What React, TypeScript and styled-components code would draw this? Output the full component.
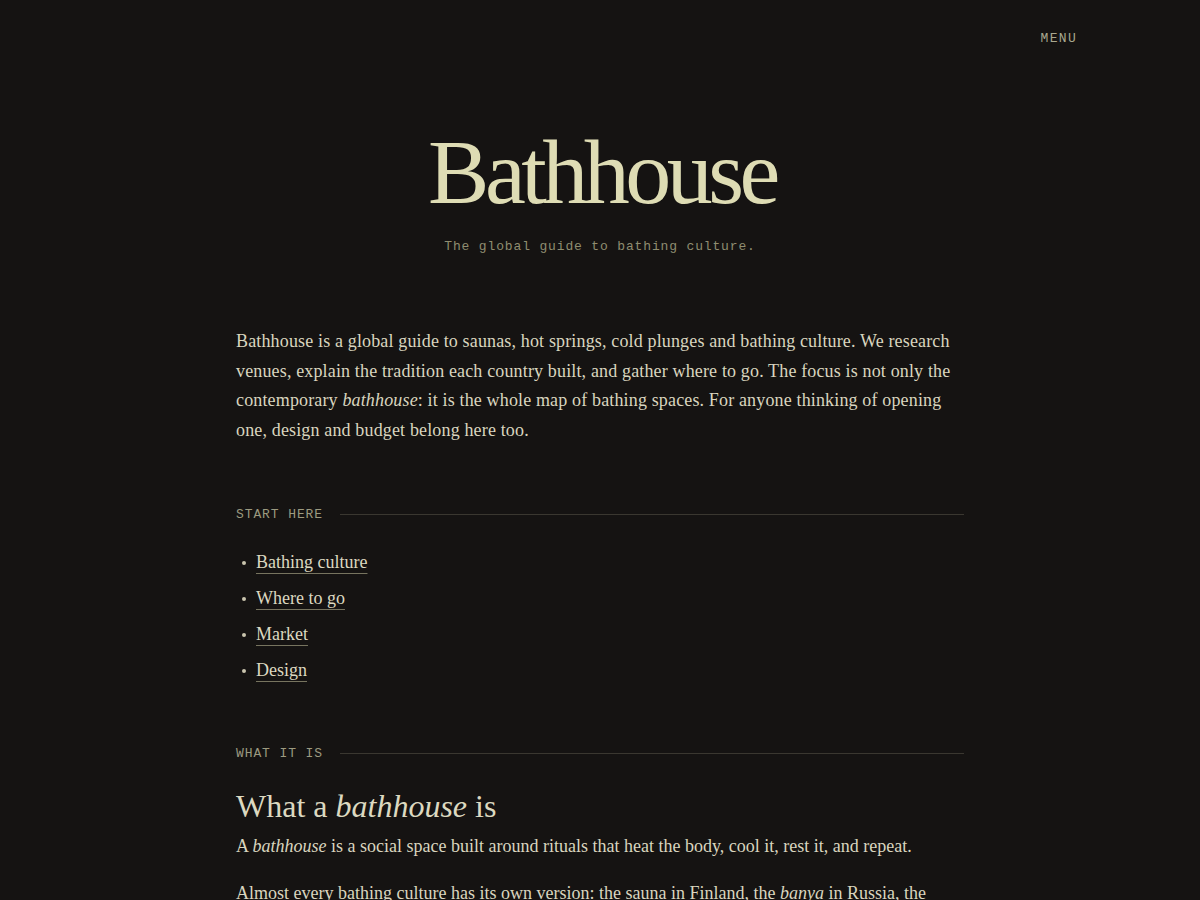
import React from "react";
import styled, { createGlobalStyle } from "styled-components";

const Global = createGlobalStyle`
  html, body { margin: 0; padding: 0; background: #151312; }
  body { color: #d9d5bf; font-family: "Liberation Serif", "Times New Roman", serif; }
  * { box-sizing: border-box; }
`;

const Page = styled.div`
  min-height: 900px;
  background: #151312;
`;

const Header = styled.header`
  display: flex;
  justify-content: flex-end;
  padding: 30px 123px 0 0;
`;

const MenuButton = styled.button`
  background: none;
  border: 0;
  padding: 0;
  font-family: "Liberation Mono", "DejaVu Sans Mono", monospace;
  font-size: 13px;
  line-height: 18px;
  letter-spacing: 1.3px;
  color: #a9a78e;
  cursor: pointer;
`;

const Hero = styled.div`
  text-align: center;
  padding-top: 78px;
`;

const Title = styled.h1`
  margin: 0;
  padding-left: 4px;
  font-family: "Liberation Serif", serif;
  font-weight: 400;
  font-size: 92px;
  line-height: 92px;
  letter-spacing: -4.5px;
  color: #dedcb4;
`;

const Tagline = styled.p`
  margin: 20px 0 0;
  font-family: "Liberation Mono", "DejaVu Sans Mono", monospace;
  font-size: 13px;
  line-height: 18px;
  letter-spacing: 0.85px;
  color: #8f8d70;
`;

const Main = styled.main`
  width: 728px;
  margin: 0 auto;
  padding-top: 71px;
`;

const Lead = styled.p`
  margin: 0;
  font-size: 18px;
  line-height: 29.7px;
  letter-spacing: 0.15px;
  color: #d9d5bf;
`;

const Section = styled.section<{ $top: number }>`
  margin-top: ${(p) => p.$top}px;
`;

const Label = styled.div`
  display: flex;
  align-items: center;
  gap: 17px;
  font-family: "Liberation Mono", "DejaVu Sans Mono", monospace;
  font-size: 13px;
  line-height: 18px;
  letter-spacing: 0.9px;
  color: #9c9a80;
  text-transform: uppercase;
  &::after {
    content: "";
    flex: 1;
    height: 1px;
    background: #3a3730;
  }
`;

const LinkList = styled.ul`
  margin: 20px 0 0;
  padding: 0 0 0 20px;
  list-style: none;
`;

const LinkItem = styled.li`
  position: relative;
  font-size: 18px;
  line-height: 36px;
  &::before {
    content: "";
    position: absolute;
    left: -14px;
    top: 17px;
    width: 4px;
    height: 4px;
    border-radius: 50%;
    background: #c9c5ae;
  }
`;

const Link = styled.a`
  color: #dcd8c0;
  text-decoration: underline;
  text-decoration-color: #77745f;
  text-decoration-thickness: 1px;
  text-underline-offset: 5px;
`;

const Heading = styled.h2`
  margin: 23px 0 6px;
  font-family: "Liberation Serif", serif;
  font-weight: 400;
  font-size: 32px;
  line-height: 40px;
  color: #dcd9c0;
  em { font-style: italic; }
`;

const Body = styled.p`
  margin: 0 0 17px;
  font-size: 18px;
  line-height: 29.7px;
  color: #d9d5bf;
`;

export default function App() {
  return (
    <Page>
      <Global />
      <Header>
        <MenuButton>MENU</MenuButton>
      </Header>
      <Hero>
        <Title>Bathhouse</Title>
        <Tagline>The global guide to bathing culture.</Tagline>
      </Hero>
      <Main>
        <Lead>
          Bathhouse is a global guide to saunas, hot springs, cold plunges and bathing culture. We research
          venues, explain the tradition each country built, and gather where to go. The focus is not only the
          contemporary <em>bathhouse</em>: it is the whole map of bathing spaces. For anyone thinking of opening
          one, design and budget belong here too.
        </Lead>
        <Section $top={60}>
          <Label>Start here</Label>
          <LinkList>
            <LinkItem><Link href="#">Bathing culture</Link></LinkItem>
            <LinkItem><Link href="#">Where to go</Link></LinkItem>
            <LinkItem><Link href="#">Market</Link></LinkItem>
            <LinkItem><Link href="#">Design</Link></LinkItem>
          </LinkList>
        </Section>
        <Section $top={57}>
          <Label>What it is</Label>
          <Heading>
            What a <em>bathhouse</em> is
          </Heading>
          <Body>
            A <em>bathhouse</em> is a social space built around rituals that heat the body, cool it, rest it, and repeat.
          </Body>
          <Body>
            Almost every bathing culture has its own version: the sauna in Finland, the <em>banya</em> in Russia, the
            hammam in Turkey, the onsen and sento in Japan, the jjimjilbang in Korea.
          </Body>
        </Section>
      </Main>
    </Page>
  );
}
